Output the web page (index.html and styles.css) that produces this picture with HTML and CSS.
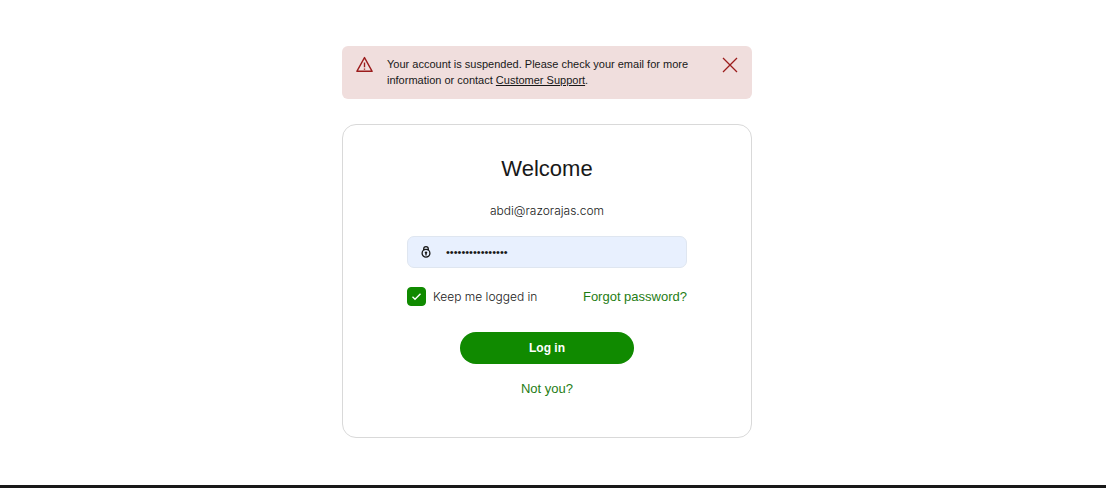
FILE: index.html
```html
<!DOCTYPE html>
<html lang="en">
<head>
    <meta charset="UTF-8">
    <meta name="viewport" content="width=device-width, initial-scale=1">
    <title>Log in</title>
    <link rel="stylesheet" href="styles.css">
</head>
<body>
    <main class="page">
        <div class="alert" role="alert">
            <svg class="alert-icon" viewBox="0 0 16 16" aria-hidden="true">
                <path d="M8 1.5 L15.2 14.4 H0.8 Z"/>
                <path d="M8 6 V10.6 M8 11.7 V12.9"/>
            </svg>
            <p class="alert-text">Your account is suspended. Please check your email for more information or contact <a href="#">Customer Support</a>.</p>
            <button type="button" class="alert-close" aria-label="Close">
                <svg viewBox="0 0 16 16" aria-hidden="true"><path d="M1 1 L15 15 M15 1 L1 15"/></svg>
            </button>
        </div>

        <section class="card">
            <h1>Welcome</h1>
            <p class="email">abdi@razorajas.com</p>

            <form class="login-form">
                <div class="password-field">
                    <label for="password">
                        <svg viewBox="0 0 12 14" role="img" aria-label="Password">
                            <circle cx="6" cy="8.2" r="3.9"/>
                            <path d="M3.7 5.2 V4 A2.3 2.3 0 0 1 8.3 4 V5.2 M6 8 V10.4"/>
                            <circle class="keyhole" cx="6" cy="7.6" r="1.2"/>
                        </svg>
                    </label>
                    <input type="password" id="password" value="password12345678">
                </div>

                <div class="options">
                    <label class="remember">
                        <input type="checkbox" checked>
                        <svg viewBox="0 0 19 19" aria-hidden="true"><path d="M5.5 9.8 L8 12.2 L13.5 6.8"/></svg>
                        <span>Keep me logged in</span>
                    </label>
                    <a href="#">Forgot password?</a>
                </div>

                <button type="submit" class="login-button">Log in</button>
            </form>

            <a href="#" class="not-you">Not you?</a>
        </section>
    </main>
    <footer class="footer"></footer>
</body>
</html>
```
FILE: styles.css
```css
* { box-sizing: border-box; }
body { margin: 0; min-height: 100vh; display: flex; flex-direction: column; background: #fff; color: #181818; font-family: "Liberation Sans", Arial, sans-serif; font-size: 13px; line-height: 20px; }
h1, p { margin: 0; }
button { border: none; font-family: inherit; cursor: pointer; }
svg { display: block; fill: none; }
a { color: #1f7d14; text-decoration: none; }

.page { flex: 1; display: flex; flex-direction: column; align-items: center; gap: 25px; padding: 46px 12px 47px 0; }

.alert { display: flex; align-items: flex-start; width: 100%; max-width: 410px; padding: 10px 14px 11px; border-radius: 6px; background: #f0dedd; }
.alert-icon { flex: none; width: 17px; height: 17px; margin-right: 14px; stroke: #9b1c1c; stroke-width: 1.3; stroke-linejoin: round; }
.alert-text { flex: 1; font-size: 11px; line-height: 16px; }
.alert-text a { color: inherit; text-decoration: underline; text-underline-offset: 1px; }
.alert-close { flex: none; margin-left: 16px; padding: 1px 0; background: none; }
.alert-close svg { width: 16px; height: 16px; stroke: #9b1c1c; stroke-width: 1.3; }

.card { display: flex; flex-direction: column; align-items: center; width: 100%; max-width: 410px; padding: 30px 64px 38px; border: 1px solid #d9d9d9; border-radius: 14px; }
h1 { font-size: 22px; font-weight: 400; line-height: 28px; }
.email { margin-top: 18px; font-family: Inter, sans-serif; font-size: 12px; font-weight: 300; }

.login-form { display: flex; flex-direction: column; align-items: center; width: 100%; margin-top: 15px; }
.password-field { display: flex; align-items: center; width: 100%; height: 32px; padding: 0 12px; border: 1px solid #dfe6f0; border-radius: 7px; background: #e8f0fe; }
.password-field svg { width: 12px; height: 14px; stroke: #181818; stroke-width: 1.3; }
.password-field .keyhole { fill: #181818; stroke: none; }
.password-field input { flex: 1; min-width: 0; margin-left: 14px; padding: 0; border: none; outline: none; background: none; color: #181818; font-family: inherit; font-size: 11px; }

.options { display: flex; justify-content: space-between; width: 100%; margin-top: 18px; line-height: 22px; }
.remember { display: grid; grid-template-columns: 19px auto; column-gap: 7px; align-items: start; font-family: Inter, sans-serif; font-size: 12px; font-weight: 300; cursor: pointer; }
.remember input { grid-area: 1 / 1; appearance: none; width: 19px; height: 19px; margin: 1px 0 0; border: 1px solid #108a00; border-radius: 4px; }
.remember input:checked { background: #108a00; }
.remember svg { grid-area: 1 / 1; width: 19px; height: 19px; margin-top: 1px; stroke: #fff; stroke-width: 1.4; pointer-events: none; }

.login-button { width: 174px; height: 32px; margin-top: 24px; border-radius: 16px; background: #108a00; color: #fff; font-size: 12px; font-weight: 700; }
.not-you { margin-top: 15px; }

.footer { height: 3px; background: #181818; }
```
